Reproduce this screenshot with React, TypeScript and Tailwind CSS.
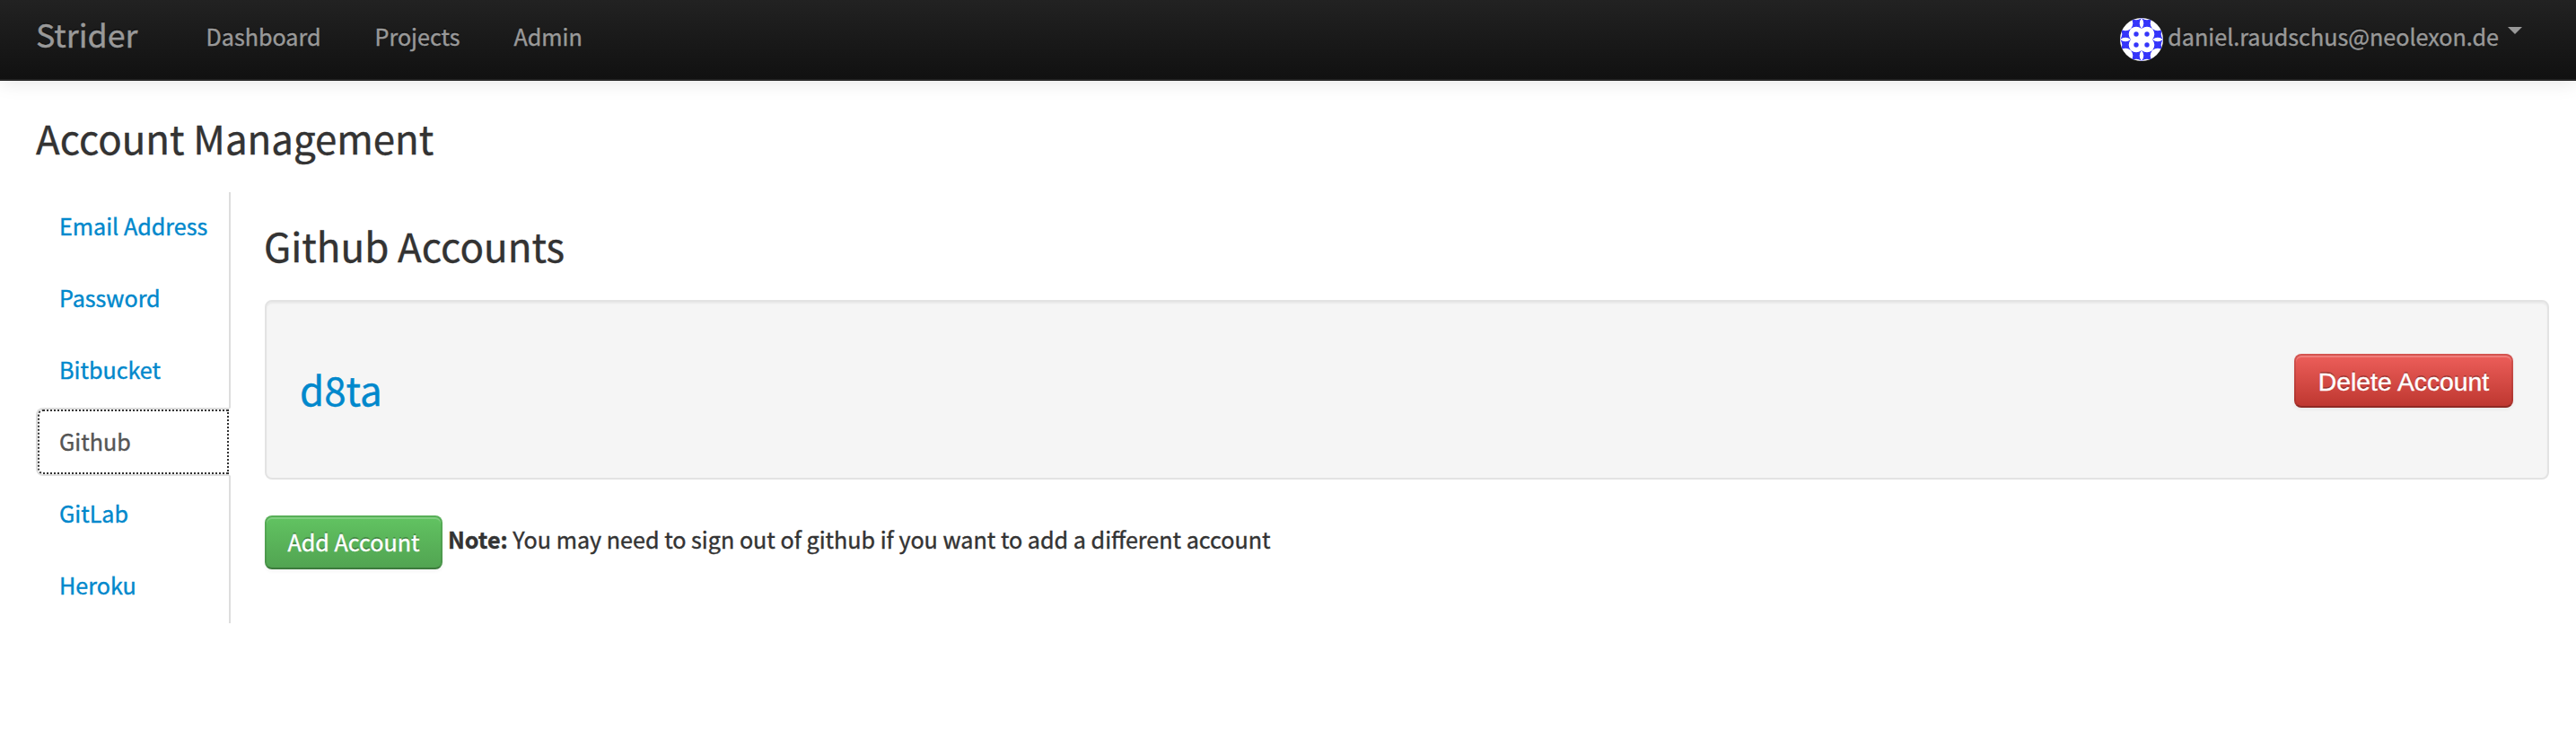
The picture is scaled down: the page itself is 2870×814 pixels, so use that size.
import React from "react";

const NAV = ["Dashboard", "Projects", "Admin"];
const TABS = ["Email Address", "Password", "Bitbucket", "Github", "GitLab", "Heroku"];

// Four-pointed star with concave sides, filling a 12x12 cell.
const STAR = "M0 0Q6 4.6 12 0Q7.4 6 12 12Q6 7.4 0 12Q4.6 6 0 0Z";
const EDGE_CELLS = [
  [12, 0], [24, 0], [0, 12], [36, 12], [0, 24], [36, 24], [12, 36], [24, 36],
];
const DOTS = [[18, 18], [30, 18], [18, 30], [30, 30]];

function Avatar() {
  return (
    <svg className="mt-5 h-12 w-12 shrink-0" viewBox="0 0 48 48">
      <defs>
        <clipPath id="round">
          <circle cx="24" cy="24" r="24" />
        </clipPath>
      </defs>
      <g clipPath="url(#round)">
        <rect width="48" height="48" fill="#fff" />
        <g fill="#3535fa">
          {EDGE_CELLS.map(([x, y]) => (
            <path key={`${x}-${y}`} d={STAR} transform={`translate(${x} ${y})`} />
          ))}
          {DOTS.map(([x, y]) => (
            <circle key={`${x}-${y}`} cx={x} cy={y} r="2.7" />
          ))}
        </g>
      </g>
    </svg>
  );
}

function Navbar() {
  return (
    <header className="flex h-[90px] items-start border-b-2 border-[#252525] bg-linear-to-b from-[#222222] to-[#111111] pr-[60px] pl-10 text-[#999999] shadow-[0_2px_20px_rgba(0,0,0,0.1)]">
      <a className="mr-[46px] text-[35.8px] leading-[75px] [text-shadow:0_-2px_0_rgba(0,0,0,0.25)]">Strider</a>
      <nav className="flex leading-[80px] [text-shadow:0_-2px_0_rgba(0,0,0,0.25)]">
        {NAV.map((label) => (
          <a key={label} className="px-[30px]">{label}</a>
        ))}
      </nav>
      <div className="ml-auto flex items-start">
        <Avatar />
        <span className="ml-[5px] leading-[80px] [text-shadow:0_-2px_0_rgba(0,0,0,0.25)]">daniel.raudschus@neolexon.de</span>
        <svg className="mt-[30px] ml-[10px] h-2 w-4" viewBox="0 0 16 8">
          <path d="M0 0H16L8 8Z" fill="#999999" />
        </svg>
      </div>
    </header>
  );
}

function Sidebar() {
  return (
    <ul className="w-[217px] shrink-0 border-r-2 border-[#dddddd]">
      {TABS.map((label) => (
        <li key={label} className="mb-1 h-[76px]">
          {label === "Github" ? (
            <a className="-mr-[2px] block h-[76px] rounded-l-lg border-2 border-[#dddddd] border-r-white bg-white px-6 py-4 leading-[38px] text-[#555555] outline-2 -outline-offset-4 outline-dotted outline-[#333333]">
              {label}
            </a>
          ) : (
            <a className="block h-[76px] border-2 border-transparent px-6 py-4 leading-[38px] whitespace-nowrap text-[#0088cc]">{label}</a>
          )}
        </li>
      ))}
    </ul>
  );
}

export default function App() {
  return (
    <div className="min-h-[814px] bg-white font-['Noto_Sans_CJK_SC','Noto_Sans',sans-serif] text-[25.14px] text-[#333333] [-webkit-text-stroke:0.4px]">
      <Navbar />
      <main className="pt-[23px] pr-[30px] pl-10">
        <h3 className="mb-[21px] text-[43.8px] leading-[80px]">Account Management</h3>
        <div className="flex">
          <Sidebar />
          <section className="ml-[38px] flex-1 pt-[19px]">
            <h3 className="mb-[21px] -ml-px text-[43.9px] leading-[80px]">Github Accounts</h3>
            <div className="flex h-[200px] items-start justify-between rounded-lg border-2 border-[#e3e3e3] bg-[#f5f5f5] pr-[38px] pl-[37px] pt-[57px] shadow-[inset_0_2px_2px_rgba(0,0,0,0.05)]">
              <a className="text-[43.9px] leading-[80px] text-[#0088cc]">d8ta</a>
              <button className="mt-[1px] h-[60px] w-[244px] rounded-lg border-2 border-[rgba(0,0,0,0.1)] border-b-[rgba(0,0,0,0.25)] bg-linear-to-b from-[#ee5f5b] to-[#bd362f] bg-origin-border pt-[2px] font-['Liberation_Sans',sans-serif] text-[28.3px] leading-[40px] text-white shadow-[inset_0_2px_0_rgba(255,255,255,0.2),0_2px_4px_rgba(0,0,0,0.05)] [text-shadow:0_-2px_0_rgba(0,0,0,0.25)]">
                Delete Account
              </button>
            </div>
            <div className="mt-10 flex items-start">
              <a className="h-[60px] w-[198px] rounded-lg border-2 border-[rgba(0,0,0,0.1)] border-b-[rgba(0,0,0,0.25)] bg-linear-to-b from-[#62c462] to-[#51a351] bg-origin-border pt-[5px] text-center leading-[44px] text-white shadow-[inset_0_2px_0_rgba(255,255,255,0.2),0_2px_4px_rgba(0,0,0,0.05)] [text-shadow:0_-2px_0_rgba(0,0,0,0.25)]">
                Add Account
              </a>
              <p className="ml-[6px] pt-[6px] leading-[40px]">
                <strong>Note:</strong> You may need to sign out of github if you want to add a different account
              </p>
            </div>
          </section>
        </div>
      </main>
    </div>
  );
}
